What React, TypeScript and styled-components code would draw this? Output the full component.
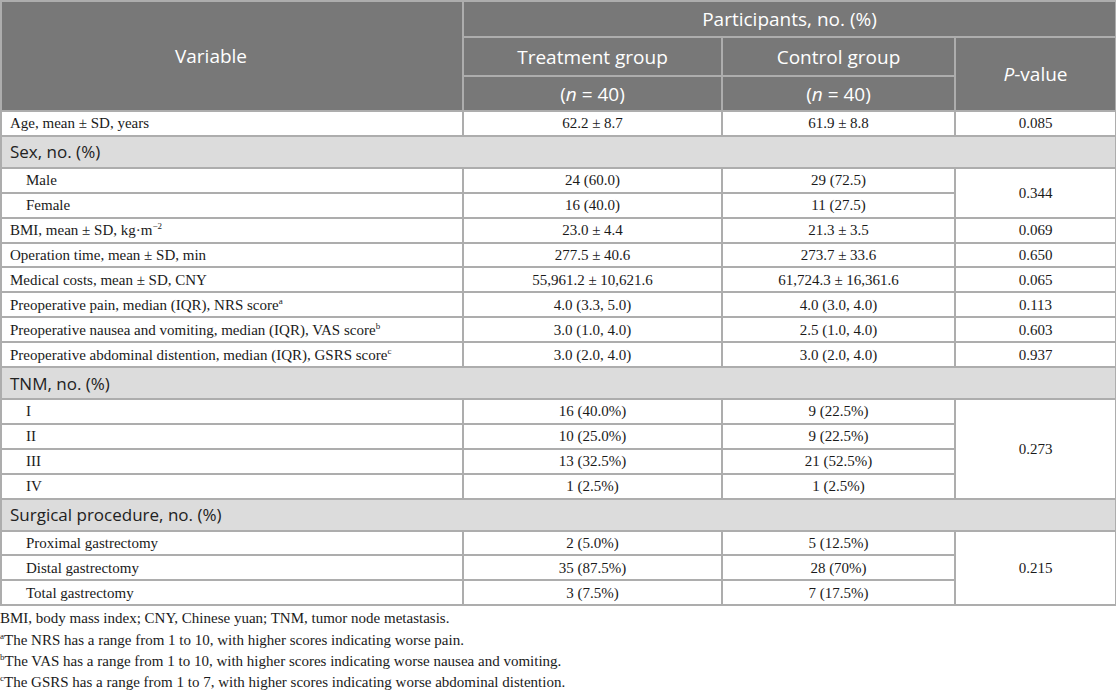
import styled, { createGlobalStyle } from 'styled-components'
import { ReactNode } from 'react'

const Global = createGlobalStyle`
	body {
		margin: 0;
		background: #ffffff;
		font-family: "Liberation Serif", "Times New Roman", serif;
		color: #1a1a1a;
	}
`

const line = '#adadad'
const headBg = '#787878'
const sectionBg = '#dcdcdc'

const Page = styled.div`
	width: 1115px;
`

const Table = styled.table`
	width: 1115px;
	border-collapse: collapse;
	table-layout: fixed;
	border: 2px solid ${line};
`

const HeadCell = styled.th<{ $h?: number; $shift?: number }>`
	background: ${headBg};
	color: #ffffff;
	font-family: "Open Sans", "Noto Sans", sans-serif;
	font-weight: 400;
	font-size: 19px;
	border: 2px solid ${line};
	padding: 0 ${p => p.$shift ?? 0}px 0 0;
	height: ${p => (p.$h ? `${p.$h}px` : 'auto')};
	text-align: center;
	vertical-align: middle;
	em {
		font-style: italic;
	}
`

const Row = styled.tr<{ $h?: number }>`
	height: ${p => p.$h ?? 24.9}px;
`

const LabelCell = styled.td<{ $indent?: boolean }>`
	border: 2px solid ${line};
	padding: 0 0 0 ${p => (p.$indent ? 24 : 8)}px;
	font-size: 15px;
	line-height: 18px;
	white-space: nowrap;
	sup {
		font-size: 9px;
		line-height: 0;
	}
`

const ValueCell = styled.td`
	border: 2px solid ${line};
	padding: 0;
	font-size: 15px;
	line-height: 18px;
	text-align: center;
	vertical-align: middle;
`

const SectionCell = styled.td`
	background: ${sectionBg};
	border: 2px solid ${line};
	padding: 0 0 0 8px;
	font-family: "Open Sans", "Noto Sans", sans-serif;
	font-size: 17px;
	color: #222222;
	height: 30px;
`

const Notes = styled.div`
	padding-top: 2px;
	font-size: 15px;
	line-height: 21.3px;
	color: #1a1a1a;
	sup {
		font-size: 9px;
		line-height: 0;
	}
`

type DataRow = {
	label: ReactNode
	t: string
	c: string
	p?: string
	span?: number
	indent?: boolean
}

type Block = { section?: string; rows: DataRow[] }

const blocks: Block[] = [
	{ rows: [{ label: 'Age, mean ± SD, years', t: '62.2 ± 8.7', c: '61.9 ± 8.8', p: '0.085' }] },
	{
		section: 'Sex, no. (%)',
		rows: [
			{ label: 'Male', t: '24 (60.0)', c: '29 (72.5)', p: '0.344', span: 2, indent: true },
			{ label: 'Female', t: '16 (40.0)', c: '11 (27.5)', indent: true },
			{ label: <>BMI, mean ± SD, kg·m<sup>−2</sup></>, t: '23.0 ± 4.4', c: '21.3 ± 3.5', p: '0.069' },
			{ label: 'Operation time, mean ± SD, min', t: '277.5 ± 40.6', c: '273.7 ± 33.6', p: '0.650' },
			{ label: 'Medical costs, mean ± SD, CNY', t: '55,961.2 ± 10,621.6', c: '61,724.3 ± 16,361.6', p: '0.065' },
			{ label: <>Preoperative pain, median (IQR), NRS score<sup>a</sup></>, t: '4.0 (3.3, 5.0)', c: '4.0 (3.0, 4.0)', p: '0.113' },
			{ label: <>Preoperative nausea and vomiting, median (IQR), VAS score<sup>b</sup></>, t: '3.0 (1.0, 4.0)', c: '2.5 (1.0, 4.0)', p: '0.603' },
			{ label: <>Preoperative abdominal distention, median (IQR), GSRS score<sup>c</sup></>, t: '3.0 (2.0, 4.0)', c: '3.0 (2.0, 4.0)', p: '0.937' },
		],
	},
	{
		section: 'TNM, no. (%)',
		rows: [
			{ label: 'I', t: '16 (40.0%)', c: '9 (22.5%)', p: '0.273', span: 4, indent: true },
			{ label: 'II', t: '10 (25.0%)', c: '9 (22.5%)', indent: true },
			{ label: 'III', t: '13 (32.5%)', c: '21 (52.5%)', indent: true },
			{ label: 'IV', t: '1 (2.5%)', c: '1 (2.5%)', indent: true },
		],
	},
	{
		section: 'Surgical procedure, no. (%)',
		rows: [
			{ label: 'Proximal gastrectomy', t: '2 (5.0%)', c: '5 (12.5%)', p: '0.215', span: 3, indent: true },
			{ label: 'Distal gastrectomy', t: '35 (87.5%)', c: '28 (70%)', indent: true },
			{ label: 'Total gastrectomy', t: '3 (7.5%)', c: '7 (17.5%)', indent: true },
		],
	},
]

const App = () => {
	return (
		<Page>
			<Global />
			<Table>
				<colgroup>
					<col style={{ width: 462 }} />
					<col style={{ width: 259 }} />
					<col style={{ width: 233 }} />
					<col style={{ width: 161 }} />
				</colgroup>
				<thead>
					<tr>
						<HeadCell rowSpan={3} $shift={42}>Variable</HeadCell>
						<HeadCell colSpan={3} $h={34}>Participants, no. (%)</HeadCell>
					</tr>
					<tr>
						<HeadCell $h={37}>Treatment group</HeadCell>
						<HeadCell $h={37}>Control group</HeadCell>
						<HeadCell rowSpan={2}><em>P</em>-value</HeadCell>
					</tr>
					<tr>
						<HeadCell $h={33}>(<em>n</em> = 40)</HeadCell>
						<HeadCell $h={33}>(<em>n</em> = 40)</HeadCell>
					</tr>
				</thead>
				<tbody>
					{blocks.map((b, bi) => (
						<>
							{b.section && (
								<Row key={`s${bi}`} $h={32}>
									<SectionCell colSpan={4}>{b.section}</SectionCell>
								</Row>
							)}
							{b.rows.map((r, ri) => (
								<Row key={`${bi}-${ri}`}>
									<LabelCell $indent={r.indent}>{r.label}</LabelCell>
									<ValueCell>{r.t}</ValueCell>
									<ValueCell>{r.c}</ValueCell>
									{r.p && <ValueCell rowSpan={r.span ?? 1}>{r.p}</ValueCell>}
								</Row>
							))}
						</>
					))}
				</tbody>
			</Table>
			<Notes>
				<div>BMI, body mass index; CNY, Chinese yuan; TNM, tumor node metastasis.</div>
				<div><sup>a</sup>The NRS has a range from 1 to 10, with higher scores indicating worse pain.</div>
				<div><sup>b</sup>The VAS has a range from 1 to 10, with higher scores indicating worse nausea and vomiting.</div>
				<div><sup>c</sup>The GSRS has a range from 1 to 7, with higher scores indicating worse abdominal distention.</div>
			</Notes>
		</Page>
	)
}

export default App
